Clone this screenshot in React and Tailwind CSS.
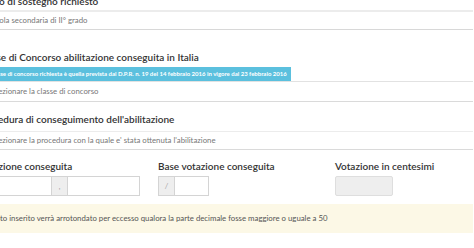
export default function App() {
  return (
    <div className="w-[474px] h-[248px] overflow-hidden bg-white font-['Lato','Open_Sans',sans-serif] text-[#333]">
      <div className="ml-[-22px] w-[495px] mt-[-8px]">
        {/* Tipo di sostegno */}
        <div className="h-[18px] leading-[18px] text-[10px] font-semibold pl-[7px]">Tipo di sostegno richiesto</div>
        <div className="h-[20px] border-t-2 border-b border-t-[#ececec] border-b-[#d8d8d8] flex items-center pl-[9px] text-[7.8px] text-[#777]">
          Scuola secondaria di II° grado
        </div>

        {/* Classe di concorso */}
        <div className="mt-[18px] h-[18px] leading-[18px] text-[10px] font-semibold">
          Classe di Concorso abilitazione conseguita in Italia
        </div>
        <div className="mt-px flex">
          <div className="h-[14px] leading-[14px] bg-[#5bc0de] text-white text-[6px] font-bold pl-[11px] pr-[4px] whitespace-nowrap">
            Classe di concorso richiesta è quella prevista dal D.P.R. n. 19 del 14 febbraio 2016 in vigore dal 23 febbraio 2016
          </div>
        </div>
        <div className="h-[21px] border-t border-b border-t-[#e2e2e2] border-b-[#dadada] flex items-center pl-[10px] text-[7.8px] text-[#777]">
          Selezionare la classe di concorso
        </div>

        {/* Procedura */}
        <div className="mt-[7px] h-[20px] leading-[20px] text-[10px] font-semibold">
          Procedura di conseguimento dell'abilitazione
        </div>
        <div className="mt-[2px] h-[19px] border-t border-b border-t-[#ececec] border-b-[#dadada] flex items-center pl-[10px] text-[7.8px] text-[#777]">
          Selezionare la procedura con la quale e' stata ottenuta l'abilitazione
        </div>

        {/* Votazione */}
        <div className="mt-[7px] grid grid-cols-[180px_177px_138px]">
          <div>
            <div className="h-[19px] leading-[19px] text-[10px] font-semibold">Votazione conseguita</div>
            <div className="flex h-[20px]">
              <div className="w-[74px] border border-[#d4d4d4] bg-white"></div>
              <div className="w-[15px] border-y border-[#d4d4d4] bg-[#eeeeee] text-[7px] text-[#999] flex items-center justify-center">,</div>
              <div className="w-[73px] border border-[#d4d4d4] bg-white"></div>
            </div>
          </div>
          <div>
            <div className="h-[19px] leading-[19px] text-[10px] font-semibold">Base votazione conseguita</div>
            <div className="flex h-[20px]">
              <div className="w-[17px] border border-[#d4d4d4] bg-[#eeeeee] text-[7px] text-[#999] flex items-center justify-center italic">/</div>
              <div className="w-[34px] border-y border-r border-[#d4d4d4] bg-white"></div>
            </div>
          </div>
          <div>
            <div className="h-[19px] leading-[19px] text-[10px] font-semibold">Votazione in centesimi</div>
            <div className="h-[20px] w-[58px] border border-[#dedede] rounded-[2px] bg-[#eeeeee]"></div>
          </div>
        </div>

        {/* Avviso */}
        <div className="mt-[8px] h-[29px] bg-[#fcf8e6] flex items-center pl-[8px] text-[7.8px] text-[#555]">
          Il voto inserito verrà arrotondato per eccesso qualora la parte decimale fosse maggiore o uguale a 50
        </div>
      </div>
    </div>
  );
}
